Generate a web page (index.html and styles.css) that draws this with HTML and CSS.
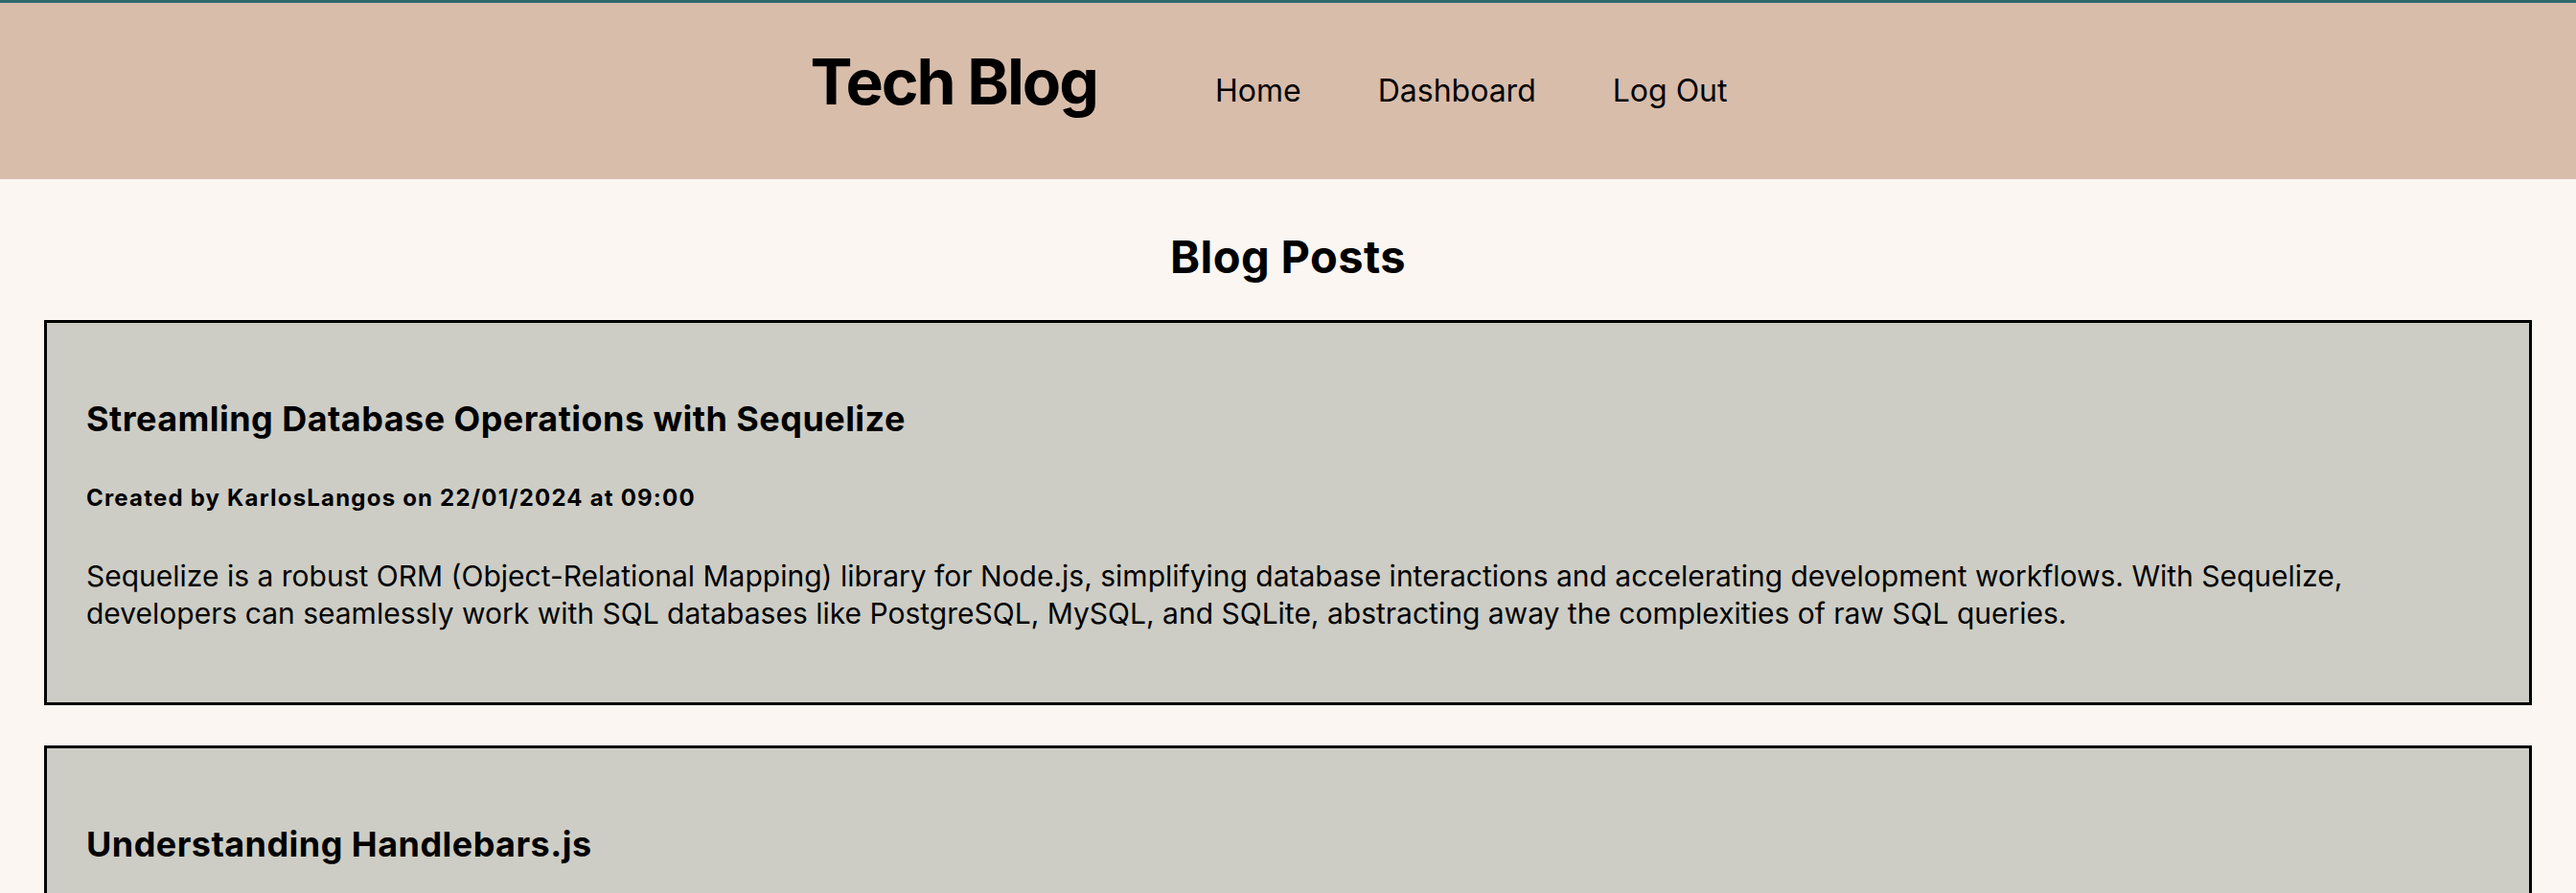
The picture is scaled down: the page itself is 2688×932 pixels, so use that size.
FILE: index.html
```html
<!DOCTYPE html>
<html lang="en">
<head>
<meta charset="utf-8">
<title>Tech Blog</title>
<link rel="stylesheet" href="styles.css">
</head>
<body>
<header class="site-header">
  <h1 class="site-title">Tech Blog</h1>
  <nav class="site-nav">
    <a class="nav-link" href="#">Home</a>
    <a class="nav-link" href="#">Dashboard</a>
    <a class="nav-link" href="#">Log Out</a>
  </nav>
</header>
<main class="content">
  <h2 class="page-title">Blog Posts</h2>
  <article class="post-card">
    <h3 class="post-title">Streamling Database Operations with Sequelize</h3>
    <p class="post-meta">Created by KarlosLangos on 22/01/2024 at 09:00</p>
    <p class="post-body">Sequelize is a robust ORM (Object-Relational Mapping) library for Node.js, simplifying database interactions and accelerating development workflows. With Sequelize, developers can seamlessly work with SQL databases like PostgreSQL, MySQL, and SQLite, abstracting away the complexities of raw SQL queries.</p>
  </article>
  <article class="post-card">
    <h3 class="post-title">Understanding Handlebars.js</h3>
    <p class="post-meta">Created by KarlosLangos on 22/01/2024 at 09:00</p>
    <p class="post-body">Handlebars.js is a popular templating engine that lets you build semantic templates with minimal logic, keeping your views clean and easy to maintain.</p>
  </article>
</main>
</body>
</html>
```
FILE: styles.css
```css
* {
  box-sizing: border-box;
}

html, body {
  margin: 0;
  padding: 0;
}

body {
  background: #fbf6f2;
  color: #000;
  font-family: Inter, "Noto Sans", sans-serif;
  line-height: 1.2;
}

.site-header {
  border-top: 3px solid #2d6a6e;
  background: #d8bdab;
  height: 187px;
  display: flex;
  justify-content: center;
  align-items: center;
}

.site-title {
  margin: 0 83px 19px 0;
  font-size: 66px;
  font-weight: 700;
  letter-spacing: -2px;
}

.site-nav {
  display: flex;
}

.nav-link {
  margin: 0 40px;
  font-size: 32px;
  color: #000;
  text-decoration: none;
}

.content {
  padding: 53px 46px 0;
}

.page-title {
  margin: 0 0 38px;
  text-align: center;
  font-size: 47px;
  font-weight: 700;
  letter-spacing: 0.4px;
}

.post-card {
  background: #cdcdc5;
  border: 3px solid #000;
  padding: 0 41px;
  margin-bottom: 42px;
}

.post-title {
  margin: 79px 0 46px;
  font-size: 36px;
  font-weight: 700;
  letter-spacing: 0.45px;
}

.post-meta {
  margin: 0 0 48px;
  font-size: 24px;
  font-weight: 700;
  letter-spacing: 1.2px;
}

.post-body {
  margin: 0 0 74px;
  font-size: 30px;
  line-height: 38.4px;
}
```
